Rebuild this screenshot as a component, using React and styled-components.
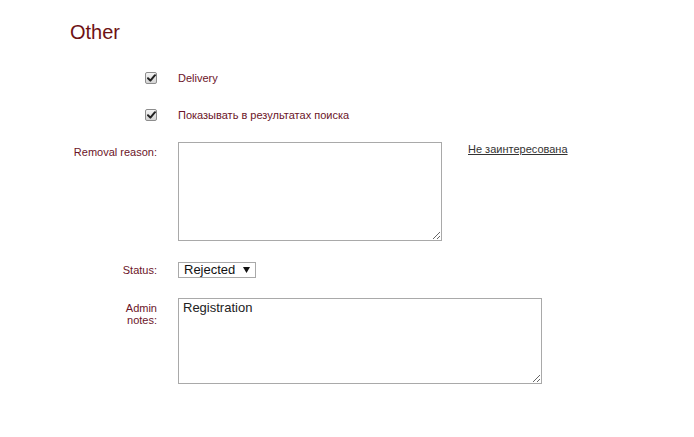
import React from "react";
import styled, { createGlobalStyle } from "styled-components";

const Global = createGlobalStyle`
  html, body { margin: 0; padding: 0; background: #fff; }
  body { font-family: "Liberation Sans", Arial, sans-serif; }
`;

const Page = styled.div`
  padding: 21px 0 0 70px;
  width: 694px;
  box-sizing: border-box;
`;

const Heading = styled.h2`
  margin: 0;
  font-size: 20px;
  line-height: 23px;
  font-weight: normal;
  color: #6e1114;
`;

const Form = styled.div`
  display: flex;
  flex-direction: column;
`;

const Row = styled.div`
  display: grid;
  grid-template-columns: 87px auto 1fr;
  column-gap: 21px;
  align-items: ${(p) => p.$align || "start"};
  margin-top: ${(p) => p.$mt}px;
  min-height: ${(p) => p.$h || 0}px;
`;

const Label = styled.div`
  text-align: right;
  font-size: 11px;
  line-height: ${(p) => p.$lh || 13}px;
  padding-top: ${(p) => p.$pt || 0}px;
  color: #6b1428;
  display: flex;
  justify-content: flex-end;
`;

const Text = styled.span`
  font-size: 11px;
  line-height: 13px;
  color: #6b1428;
`;

const CheckBox = styled.span`
  box-sizing: border-box;
  width: 12px;
  height: 12px;
  border: 1px solid #8d8d8d;
  border-radius: 2px;
  background: linear-gradient(#f4f4f4, #d4d4d4);
  display: inline-flex;
  align-items: center;
  justify-content: center;
`;

const TextArea = styled.textarea`
  box-sizing: border-box;
  width: ${(p) => p.$w}px;
  height: ${(p) => p.$hh}px;
  border: 1px solid #a9a9a9;
  padding: 1px 4px;
  margin: 0;
  font-family: "Liberation Sans", Arial, sans-serif;
  font-size: 13px;
  line-height: 16px;
  color: #222;
  display: block;
  outline: none;
`;

const Link = styled.a`
  font-size: 11px;
  line-height: 13px;
  color: #333;
  text-decoration: underline;
  padding-top: 1px;
  justify-self: start;
  margin-left: 5px;
  cursor: pointer;
`;

const SelectWrap = styled.span`
  position: relative;
  display: inline-flex;
  width: 78px;
`;

const Select = styled.select`
  appearance: none;
  -webkit-appearance: none;
  box-sizing: border-box;
  width: 78px;
  height: 16px;
  border: 1px solid #a9a9a9;
  border-radius: 0;
  background: #fff;
  padding: 0 0 0 5px;
  margin: 0;
  font-family: "Liberation Sans", Arial, sans-serif;
  font-size: 13px;
  line-height: 14px;
  color: #111;
  outline: none;
`;

const Arrow = styled.svg`
  position: absolute;
  right: 6px;
  top: 5px;
  pointer-events: none;
`;

function Check() {
  return (
    <CheckBox>
      <svg width="9" height="8" viewBox="0 0 9 8">
        <path d="M1 4.2 L3.4 6.6 L8 1.2" fill="none" stroke="#222" strokeWidth="2" strokeLinecap="round" strokeLinejoin="round" />
      </svg>
    </CheckBox>
  );
}

export default function App() {
  return (
    <>
      <Global />
      <Page>
        <Heading>Other</Heading>
        <Form>
          <Row $mt={26} $h={16} $align="center">
            <Label><Check /></Label>
            <Text>Delivery</Text>
          </Row>
          <Row $mt={21} $h={16} $align="center">
            <Label><Check /></Label>
            <Text>Показывать в результатах поиска</Text>
          </Row>
          <Row $mt={19}>
            <Label $pt={4}>Removal reason:</Label>
            <TextArea $w={264} $hh={99} />
            <Link>Не заинтересована</Link>
          </Row>
          <Row $mt={21} $align="center">
            <Label>Status:</Label>
            <SelectWrap>
              <Select defaultValue="rejected">
                <option value="new">New</option>
                <option value="approved">Approved</option>
                <option value="rejected">Rejected</option>
              </Select>
              <Arrow width="7" height="6" viewBox="0 0 7 6">
                <path d="M0 0 H7 L3.5 6 Z" fill="#111" />
              </Arrow>
            </SelectWrap>
          </Row>
          <Row $mt={20}>
            <Label $pt={4} $lh={12}>Admin<br />notes:</Label>
            <TextArea $w={364} $hh={86} defaultValue="Registration" />
          </Row>
        </Form>
      </Page>
    </>
  );
}
